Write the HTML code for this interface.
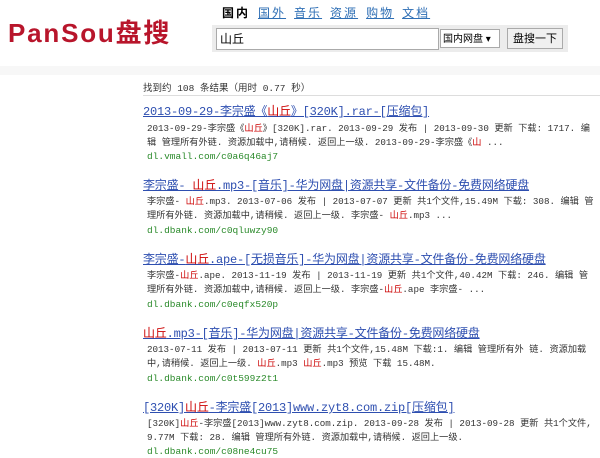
<!DOCTYPE html>
<html><head><meta charset="utf-8"><style>
body{margin:0;width:600px;height:458px;background:#fff;overflow:hidden;position:relative;font-family:"Liberation Mono","Noto Sans CJK SC",monospace;}
.a{position:absolute;white-space:nowrap;}
.logo{left:8px;top:13px;font:bold 26px "Liberation Sans","Noto Sans CJK SC",sans-serif;color:#b8152b;letter-spacing:1.8px;}
.tabs{left:222px;top:4px;font:12px "Liberation Sans","Noto Sans CJK SC",sans-serif;}
.tabs span{margin-right:8px;color:#2f6fb5;text-decoration:underline;letter-spacing:2px}
.tabs b{margin-right:8px;color:#000;letter-spacing:2px}
.bar{left:212px;top:25px;width:356px;height:27px;background:#ececec;}
.inp{left:216px;top:28px;width:218px;height:20px;border:1px solid #aaa;background:#fff;font:12px "Liberation Sans","Noto Sans CJK SC",sans-serif;line-height:20px;padding-left:3px;box-sizing:content-box}
.sel{left:440px;top:29px;width:60px;height:19px;border:1px solid #aaa;background:#fff;font:10px "Liberation Sans","Noto Sans CJK SC",sans-serif;line-height:19px;padding-left:2px;box-sizing:border-box}
.btn{left:507px;top:28px;width:56px;height:21px;border:1px solid #aaa;background:#f0f0f0;font:11px "Liberation Sans","Noto Sans CJK SC",sans-serif;line-height:21px;text-align:center;box-sizing:border-box}
.band{left:0;top:66px;width:600px;height:9px;background:#f7f7f7}
.cnt{left:143px;top:80px;font-size:9.5px;color:#333}
.hr{left:143px;top:95px;width:457px;height:1px;background:#ddd}
.t{left:143px;font-size:12px;color:#2e4fb0;text-decoration:underline;letter-spacing:-0.2px}
.t em,.s em{font-style:normal;color:#c00}
.s{left:147px;font-size:9.2px;color:#333;line-height:14px;white-space:normal;width:450px}
.u{left:147px;font-size:9.5px;color:#2a8a2a}
</style></head><body>
<div class="a logo">PanSou盘搜</div>
<div class="a tabs"><b>国内</b><span>国外</span><span>音乐</span><span>资源</span><span>购物</span><span>文档</span></div>
<div class="a bar"></div>
<div class="a inp">山丘</div>
<div class="a sel">国内网盘 ▾</div>
<div class="a btn">盘搜一下</div>
<div class="a band"></div>
<div class="a cnt">找到约 108 条结果（用时 0.77 秒）</div>
<div class="a hr"></div>

<div class="a t" style="top:102px">2013-09-29-李宗盛《<em>山丘</em>》[320K].rar-[压缩包]</div>
<div class="a s" style="top:122px">2013-09-29-李宗盛《<em>山丘</em>》[320K].rar. 2013-09-29 发布 | 2013-09-30 更新 下载: 1717. 编辑 管理所有外链. 资源加载中,请稍候. 返回上一级. 2013-09-29-李宗盛《<em>山</em> ...</div>
<div class="a u" style="top:151px">dl.vmall.com/c0a6q46aj7</div>

<div class="a t" style="top:176px">李宗盛- <em>山丘</em>.mp3-[音乐]-华为网盘|资源共享-文件备份-免费网络硬盘</div>
<div class="a s" style="top:195px">李宗盛- <em>山丘</em>.mp3. 2013-07-06 发布 | 2013-07-07 更新 共1个文件,15.49M 下载: 308. 编辑 管理所有外链. 资源加载中,请稍候. 返回上一级. 李宗盛- <em>山丘</em>.mp3 ...</div>
<div class="a u" style="top:225px">dl.dbank.com/c0qluwzy90</div>

<div class="a t" style="top:250px">李宗盛-<em>山丘</em>.ape-[无损音乐]-华为网盘|资源共享-文件备份-免费网络硬盘</div>
<div class="a s" style="top:269px">李宗盛-<em>山丘</em>.ape. 2013-11-19 发布 | 2013-11-19 更新 共1个文件,40.42M 下载: 246. 编辑 管理所有外链. 资源加载中,请稍候. 返回上一级. 李宗盛-<em>山丘</em>.ape 李宗盛- ...</div>
<div class="a u" style="top:299px">dl.dbank.com/c0eqfx520p</div>

<div class="a t" style="top:324px"><em>山丘</em>.mp3-[音乐]-华为网盘|资源共享-文件备份-免费网络硬盘</div>
<div class="a s" style="top:343px">2013-07-11 发布 | 2013-07-11 更新 共1个文件,15.48M 下载:1. 编辑 管理所有外 链. 资源加载中,请稍候. 返回上一级. <em>山丘</em>.mp3 <em>山丘</em>.mp3 预览 下载 15.48M.</div>
<div class="a u" style="top:373px">dl.dbank.com/c0t599z2t1</div>

<div class="a t" style="top:398px">[320K]<em>山丘</em>-李宗盛[2013]www.zyt8.com.zip[压缩包]</div>
<div class="a s" style="top:417px">[320K]<em>山丘</em>-李宗盛[2013]www.zyt8.com.zip. 2013-09-28 发布 | 2013-09-28 更新 共1个文件, 9.77M 下载: 28. 编辑 管理所有外链. 资源加载中,请稍候. 返回上一级.</div>
<div class="a u" style="top:446px">dl.dbank.com/c08ne4cu75</div>
</body></html>
